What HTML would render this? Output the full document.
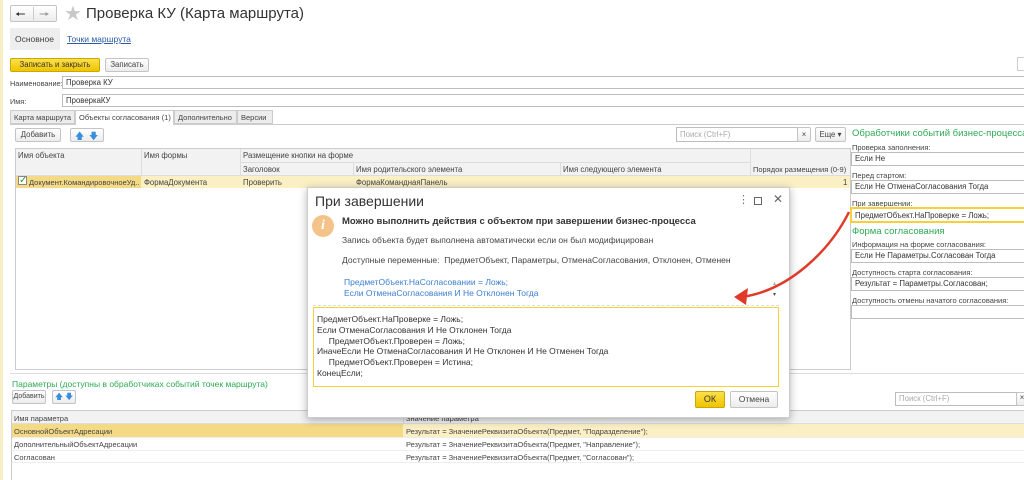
<!DOCTYPE html>
<html><head><meta charset="utf-8"><style>
*{box-sizing:border-box;margin:0;padding:0}
body{width:1024px;height:480px;position:relative;overflow:hidden;background:#fff;font-family:"Liberation Sans",Arial,sans-serif;font-size:7.8px;color:#444}
.a{position:absolute;white-space:nowrap}
.btn{position:absolute;border:1px solid #c4c4c4;border-radius:2px;background:linear-gradient(#fff,#ececec);text-align:center;color:#444}
.fld{position:absolute;border:1px solid #bdbdbd;background:#fff;padding-left:3px;color:#333;overflow:hidden}
.g{color:#2eaa55}
.hl{position:absolute;height:1px;background:#ddd}
.vl{position:absolute;width:1px;background:#ddd}
.tab{position:absolute;top:110px;height:14px;background:#ececec;border:1px solid #ccc;padding:2px 3px;font-size:7.5px;overflow:hidden;white-space:nowrap}
.ar{position:absolute;color:#3a8fdc;font-size:9px}
</style></head><body>
<div class="a" style="left:0;top:0;width:3px;height:480px;background:#f6efc5"></div>
<!-- nav -->
<div class="btn" style="left:10px;top:5px;width:47px;height:17px"></div>
<div class="vl" style="left:33px;top:7px;height:13px;background:#ccc"></div>
<div class="a" style="left:15px;top:5px;font-size:12px;color:#333">&#129044;</div>
<div class="a" style="left:39px;top:5px;font-size:12px;color:#999">&#129046;</div>
<div class="a" style="left:64px;top:1px;font-size:20px;color:#c8c8c8">★</div>
<div class="a" style="left:86px;top:5px;font-size:15px;color:#333">Проверка КУ (Карта маршрута)</div>
<div class="a" style="left:10px;top:28px;width:50px;height:22px;background:#eeeeee"></div>
<div class="a" style="left:15px;top:34px;font-size:8.5px;color:#444">Основное</div>
<div class="a" style="left:67px;top:34px;font-size:8.5px;color:#2a5aa8;text-decoration:underline">Точки маршрута</div>
<div class="btn" style="left:10px;top:58px;width:90px;height:14px;background:linear-gradient(#fbe04a,#f0c400);border-color:#c9a800;color:#333;line-height:12px">Записать и закрыть</div>
<div class="btn" style="left:105px;top:58px;width:44px;height:14px;line-height:12px">Записать</div>
<div class="a" style="left:1017px;top:57px;width:8px;height:14px;border:1px solid #ccc"></div>
<div class="a" style="left:10px;top:79px;font-size:7.3px">Наименование:</div>
<div class="fld" style="left:62px;top:76px;width:970px;height:13px;line-height:11px">Проверка КУ</div>
<div class="a" style="left:10px;top:97px;font-size:7.3px">Имя:</div>
<div class="fld" style="left:62px;top:94px;width:970px;height:13px;line-height:11px">ПроверкаКУ</div>
<!-- tabs -->
<div class="hl" style="left:10px;top:124px;width:1014px;background:#ccc"></div>
<div class="tab" style="left:10px;width:65px">Карта маршрута</div>
<div class="tab" style="left:75px;width:99px;height:15px;background:#fff;border-bottom:none">Объекты согласования (1)</div>
<div class="tab" style="left:174px;width:63px">Дополнительно</div>
<div class="tab" style="left:237px;width:36px">Версии</div>
<div class="btn" style="left:15px;top:128px;width:46px;height:14px;line-height:12px">Добавить</div>
<div class="btn" style="left:70px;top:128px;width:34px;height:14px"></div>
<div class="ar" style="left:75px;top:129px">🡅</div>
<div class="ar" style="left:89px;top:129px">🡇</div>
<div class="fld" style="left:676px;top:127px;width:122px;height:15px;line-height:13px;color:#aaa">Поиск (Ctrl+F)</div>
<div class="btn" style="left:797px;top:127px;width:14px;height:15px;line-height:13px">×</div>
<div class="btn" style="left:815px;top:127px;width:31px;height:15px;line-height:13px">Еще ▾</div>
<!-- table -->
<div class="a" style="left:15px;top:148px;width:836px;height:222px;border:1px solid #ccc"></div>
<div class="a" style="left:16px;top:149px;width:834px;height:26px;background:#f2f2f2"></div>
<div class="hl" style="left:240px;top:162px;width:510px"></div>
<div class="hl" style="left:16px;top:175px;width:834px"></div>
<div class="vl" style="left:141px;top:149px;height:39px"></div>
<div class="vl" style="left:240px;top:149px;height:39px"></div>
<div class="vl" style="left:353px;top:162px;height:26px"></div>
<div class="vl" style="left:560px;top:162px;height:26px"></div>
<div class="vl" style="left:750px;top:149px;height:39px"></div>
<div class="a" style="left:18px;top:151px">Имя объекта</div>
<div class="a" style="left:144px;top:151px">Имя формы</div>
<div class="a" style="left:243px;top:151px">Размещение кнопки на форме</div>
<div class="a" style="left:243px;top:165px">Заголовок</div>
<div class="a" style="left:356px;top:165px">Имя родительского элемента</div>
<div class="a" style="left:563px;top:165px">Имя следующего элемента</div>
<div class="a" style="left:753px;top:165px;font-size:7.5px">Порядок размещения (0-9)</div>
<div class="a" style="left:16px;top:176px;width:834px;height:12px;background:#fbefc4"></div>
<div class="a" style="left:16px;top:176px;width:125px;height:12px;background:#f5da85"></div>
<div class="a" style="left:18px;top:176px;width:9px;height:9px;border:1px solid #888;background:#fff;color:#2a9a2a;font-size:10px;line-height:7px">✓</div>
<div class="a" style="left:29px;top:178px;width:111px;overflow:hidden;font-size:7.5px">Документ.КомандировочноеУд...</div>
<div class="a" style="left:144px;top:178px">ФормаДокумента</div>
<div class="a" style="left:243px;top:178px">Проверить</div>
<div class="a" style="left:356px;top:178px">ФормаКоманднаяПанель</div>
<div class="a" style="left:843px;top:178px">1</div>
<!-- right panel -->
<div class="a g" style="left:852px;top:128px;font-size:9.5px">Обработчики событий бизнес-процесса</div>
<div class="a" style="left:852px;top:143px;font-size:7.5px">Проверка заполнения:</div>
<div class="fld" style="left:851px;top:152px;width:180px;height:14px;line-height:12px">Если Не</div>
<div class="a" style="left:852px;top:171px;font-size:7.5px">Перед стартом:</div>
<div class="fld" style="left:851px;top:180px;width:180px;height:14px;line-height:12px">Если Не ОтменаСогласования Тогда</div>
<div class="a" style="left:852px;top:199px;font-size:7.5px">При завершении:</div>
<div class="fld" style="left:850px;top:207px;width:180px;height:16px;line-height:13px;border:2px solid #f5d03a">ПредметОбъект.НаПроверке = Ложь;</div>
<div class="a g" style="left:852px;top:226px;font-size:9.5px">Форма согласования</div>
<div class="a" style="left:852px;top:240px;font-size:7.5px">Информация на форме согласования:</div>
<div class="fld" style="left:851px;top:249px;width:180px;height:14px;line-height:12px">Если Не Параметры.Согласован Тогда</div>
<div class="a" style="left:852px;top:268px;font-size:7.5px">Доступность старта согласования:</div>
<div class="fld" style="left:851px;top:277px;width:180px;height:14px;line-height:12px">Результат = Параметры.Согласован;</div>
<div class="a" style="left:852px;top:296px;font-size:7.5px">Доступность отмены начатого согласования:</div>
<div class="fld" style="left:851px;top:305px;width:180px;height:14px"></div>
<!-- bottom -->
<div class="hl" style="left:10px;top:373px;width:1014px"></div>
<div class="a g" style="left:12px;top:379px;font-size:8.5px">Параметры (доступны в обработчиках событий точек маршрута)</div>
<div class="btn" style="left:12px;top:390px;width:34px;height:14px;line-height:12px;font-size:7px">Добавить</div>
<div class="btn" style="left:52px;top:390px;width:24px;height:14px"></div>
<div class="ar" style="left:55px;top:391px;font-size:8px">🡅</div>
<div class="ar" style="left:65px;top:391px;font-size:8px">🡇</div>
<div class="fld" style="left:895px;top:392px;width:122px;height:14px;line-height:12px;color:#aaa">Поиск (Ctrl+F)</div>
<div class="btn" style="left:1016px;top:392px;width:12px;height:14px">×</div>
<div class="a" style="left:11px;top:410px;width:1013px;height:70px;border-left:1px solid #ccc;border-top:1px solid #ccc"></div>
<div class="a" style="left:12px;top:411px;width:1012px;height:13px;background:#f2f2f2;border-bottom:1px solid #ddd"></div>
<div class="vl" style="left:403px;top:411px;height:13px"></div>
<div class="a" style="left:14px;top:414px;font-size:7.5px">Имя параметра</div>
<div class="a" style="left:406px;top:414px;font-size:7.5px">Значение параметра</div>
<div class="a" style="left:12px;top:424px;width:1012px;height:13px;background:#fbefc4"></div>
<div class="a" style="left:12px;top:424px;width:391px;height:13px;background:#f5da85"></div>
<div class="hl" style="left:12px;top:437px;width:1012px;background:#eee"></div>
<div class="hl" style="left:12px;top:450px;width:1012px;background:#eee"></div>
<div class="hl" style="left:12px;top:462px;width:1012px;background:#eee"></div>
<div class="a" style="left:14px;top:427px;font-size:7.5px">ОсновнойОбъектАдресации</div>
<div class="a" style="left:406px;top:427px;font-size:7.5px">Результат = ЗначениеРеквизитаОбъекта(Предмет, "Подразделение");</div>
<div class="a" style="left:14px;top:440px;font-size:7.5px">ДополнительныйОбъектАдресации</div>
<div class="a" style="left:406px;top:440px;font-size:7.5px">Результат = ЗначениеРеквизитаОбъекта(Предмет, "Направление");</div>
<div class="a" style="left:14px;top:453px;font-size:7.5px">Согласован</div>
<div class="a" style="left:406px;top:453px;font-size:7.5px">Результат = ЗначениеРеквизитаОбъекта(Предмет, "Согласован");</div>
<!-- dialog -->
<div class="a" style="left:307px;top:187px;width:483px;height:231px;background:#fff;border:1px solid #ccc;box-shadow:0 2px 8px rgba(0,0,0,.3)"></div>
<div class="a" style="left:315px;top:193px;font-size:14px;color:#333">При завершении</div>
<div class="a" style="left:738px;top:193px;font-size:11px;color:#777">⋮</div>
<div class="a" style="left:754px;top:197px;width:8px;height:8px;border:1px solid #666"></div>
<div class="a" style="left:773px;top:192px;font-size:12px;color:#666">✕</div>
<div class="a" style="left:312px;top:215px;width:22px;height:22px;border-radius:50%;background:#f4c38a;color:#fff;font:bold italic 14px 'Liberation Serif',serif;text-align:center;line-height:22px">i</div>
<div class="a" style="left:342px;top:216px;font-size:9.5px;font-weight:bold;color:#333">Можно выполнить действия с объектом при завершении бизнес-процесса</div>
<div class="a" style="left:342px;top:235px;font-size:8.5px;color:#444">Запись объекта будет выполнена автоматически если он был модифицирован</div>
<div class="a" style="left:342px;top:255px;font-size:8.5px;color:#444">Доступные переменные:&nbsp;&nbsp;ПредметОбъект, Параметры, ОтменаСогласования, Отклонен, Отменен</div>
<div class="a" style="left:344px;top:277px;font-size:8.5px;color:#3a7fd0;line-height:11px">ПредметОбъект.НаСогласовании = Ложь;<br>Если ОтменаСогласования И Не Отклонен Тогда</div>
<div class="a" style="left:773px;top:280px;font-size:6px;color:#aaa">▴</div>
<div class="a" style="left:773px;top:291px;font-size:6px;color:#555">▾</div>
<div class="a" style="left:313px;top:305px;width:466px;border-top:1px dashed #ddd"></div>
<div class="a" style="left:313px;top:307px;width:466px;height:80px;border:1px solid #f5d03a;padding:6px 3px;font-size:8.5px;line-height:10.8px;color:#333">ПредметОбъект.НаПроверке = Ложь;<br>Если ОтменаСогласования И Не Отклонен Тогда<br>&nbsp;&nbsp;&nbsp;&nbsp;&nbsp;ПредметОбъект.Проверен = Ложь;<br>ИначеЕсли Не ОтменаСогласования И Не Отклонен И Не Отменен Тогда<br>&nbsp;&nbsp;&nbsp;&nbsp;&nbsp;ПредметОбъект.Проверен = Истина;<br>КонецЕсли;</div>
<div class="btn" style="left:695px;top:391px;width:30px;height:17px;line-height:15px;background:linear-gradient(#fbe04a,#f0c400);border-color:#c9a800;color:#333;font-size:9px">ОК</div>
<div class="btn" style="left:730px;top:391px;width:48px;height:17px;line-height:15px;font-size:8.5px">Отмена</div>
<!-- arrow -->
<svg class="a" style="left:0;top:0" width="1024" height="480"><path d="M849 212 C 830 250, 790 290, 742 297" fill="none" stroke="#e03a2a" stroke-width="2.5"/><path d="M734 297 L748 288 L746 305 Z" fill="#e03a2a"/></svg>
</body></html>
